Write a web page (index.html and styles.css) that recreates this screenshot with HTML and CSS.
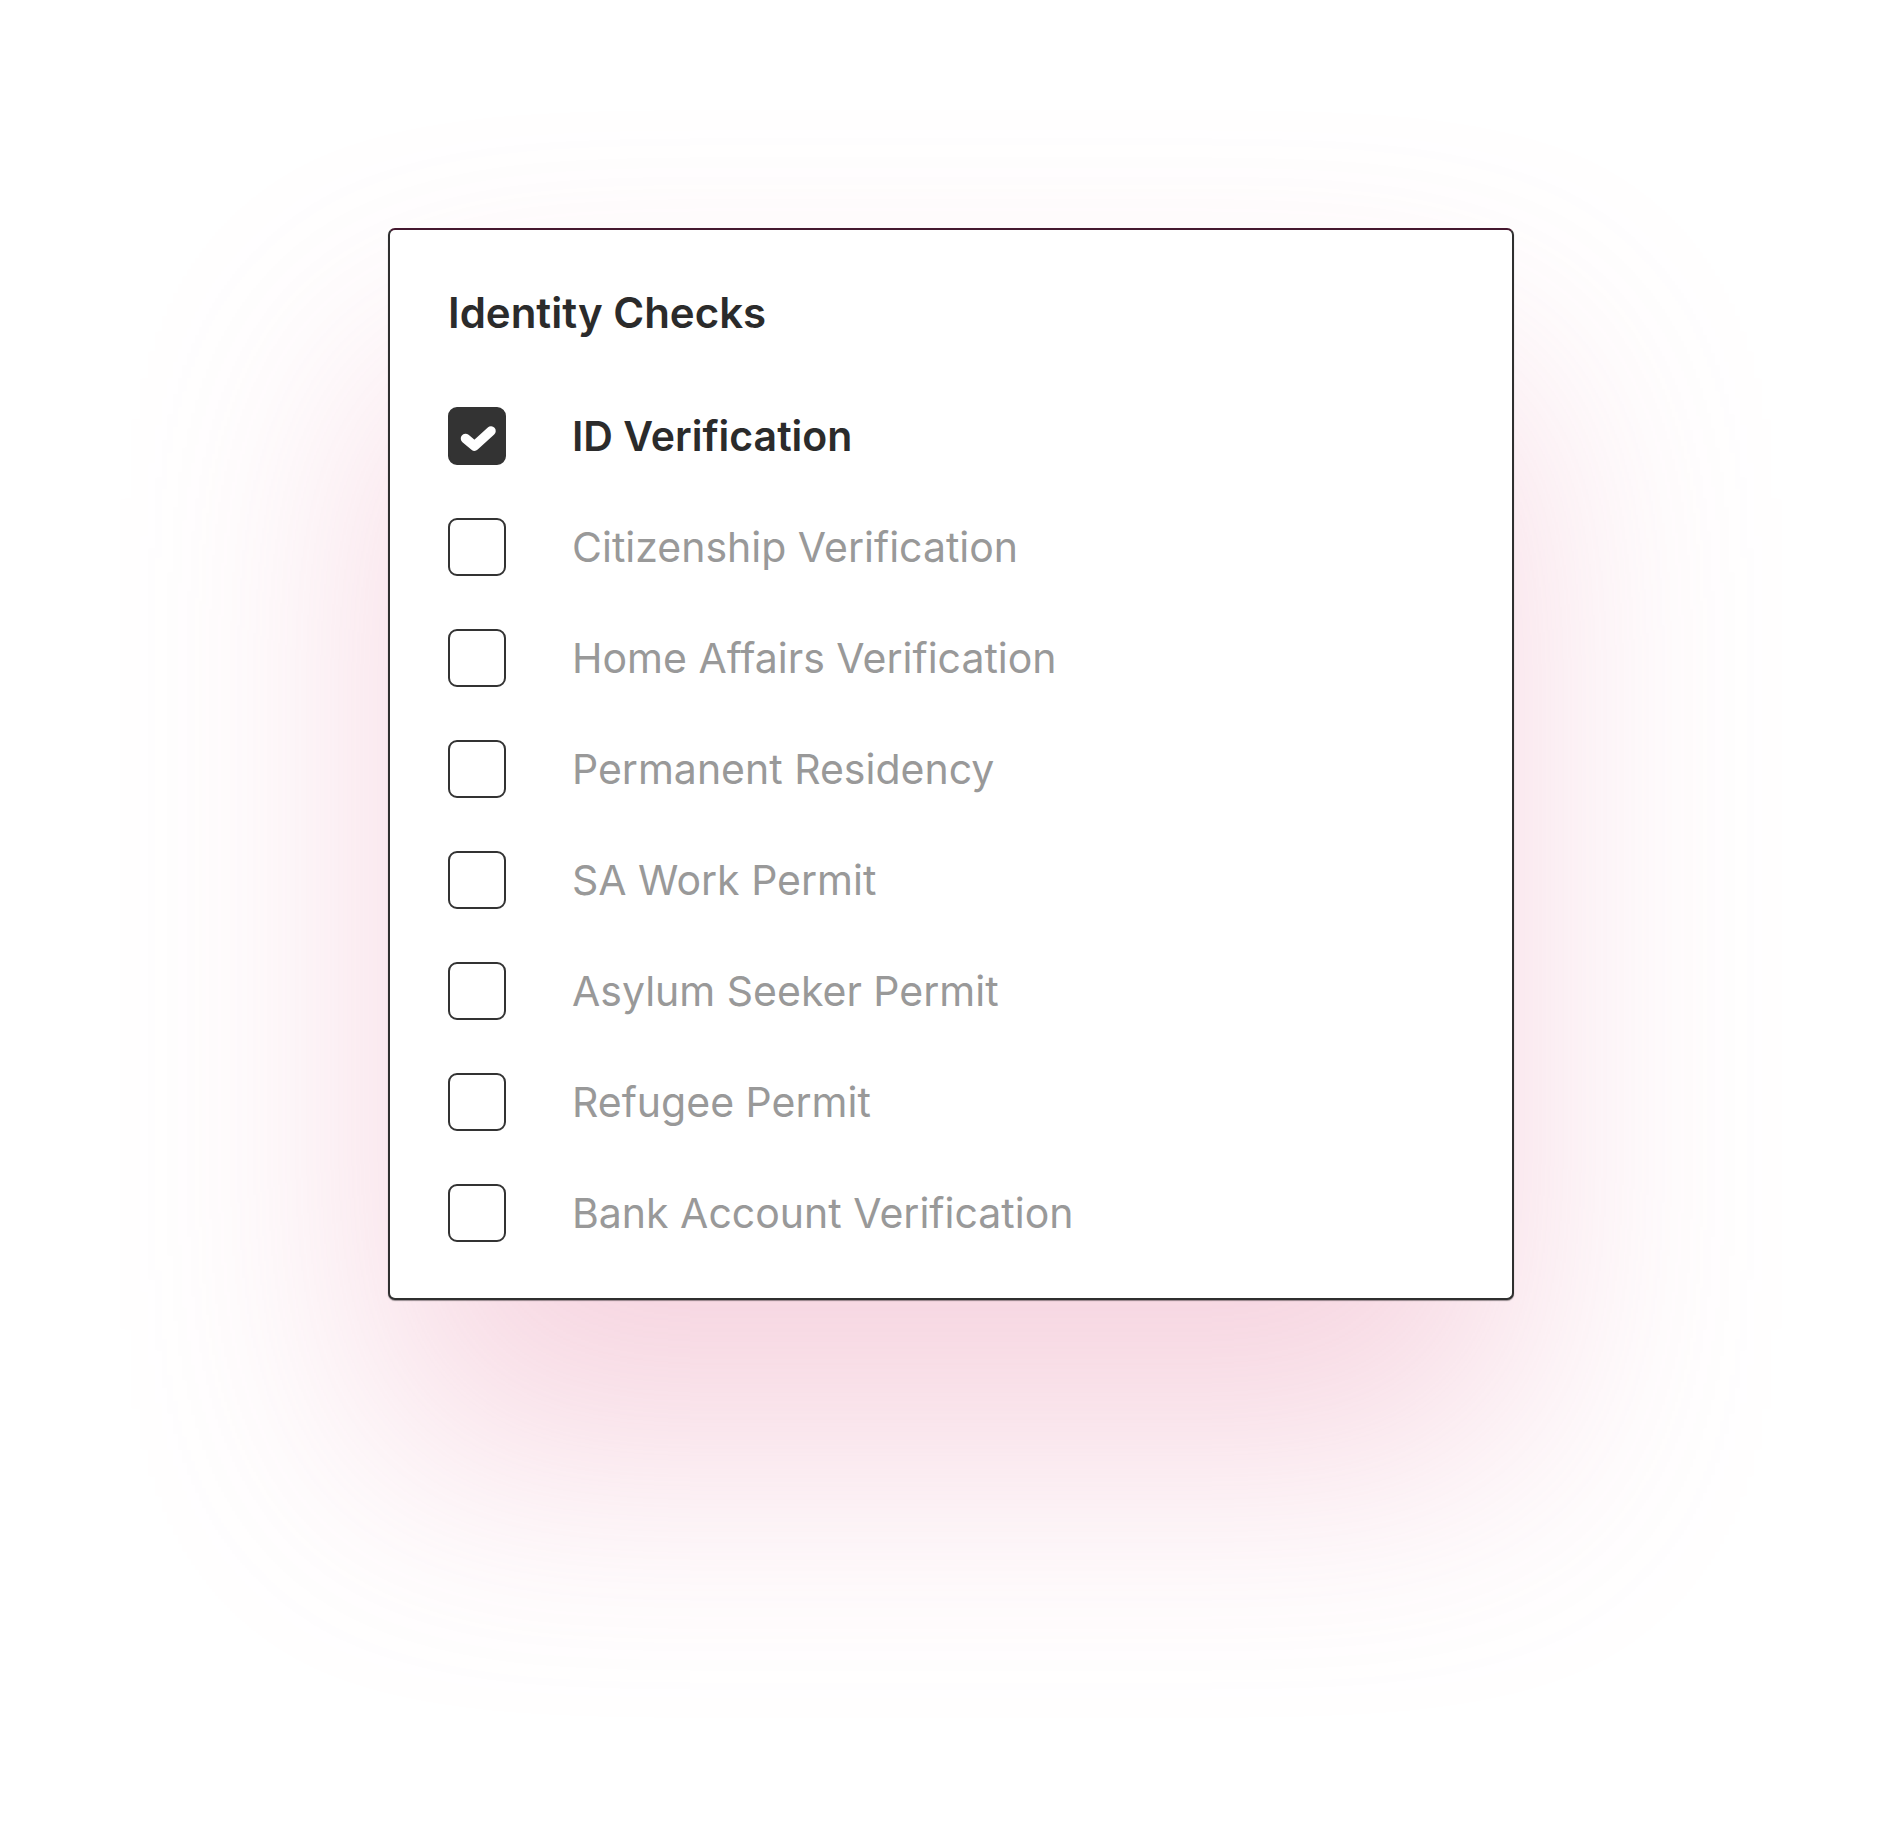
FILE: index.html
```html
<!DOCTYPE html>
<html lang="en">
<head>
  <meta charset="UTF-8" />
  <title>Identity Checks</title>
  <link rel="stylesheet" href="styles.css">
</head>
<body>
  <div class="page">
    <div class="card">
      <h2 class="card-title">Identity Checks</h2>
      <ul class="check-list">
        <li class="check-row checked">
          <span class="box">
            <svg viewBox="0 0 58 58" width="58" height="58">
              <polyline points="17.5,31.5 26.5,39 43,24" fill="none" stroke="#fff" stroke-width="9.5" stroke-linecap="round" stroke-linejoin="round" />
            </svg>
          </span>
          <span class="label">ID Verification</span>
        </li>
        <li class="check-row"><span class="box"></span><span class="label">Citizenship Verification</span></li>
        <li class="check-row"><span class="box"></span><span class="label">Home Affairs Verification</span></li>
        <li class="check-row"><span class="box"></span><span class="label">Permanent Residency</span></li>
        <li class="check-row"><span class="box"></span><span class="label">SA Work Permit</span></li>
        <li class="check-row"><span class="box"></span><span class="label">Asylum Seeker Permit</span></li>
        <li class="check-row"><span class="box"></span><span class="label">Refugee Permit</span></li>
        <li class="check-row"><span class="box"></span><span class="label">Bank Account Verification</span></li>
      </ul>
    </div>
  </div>
</body>
</html>
```

FILE: styles.css
```css
body {
  margin: 0;
  background: #fff;
  font-family: Inter, "Noto Sans", sans-serif;
  color: #2b2b2b;
}
.page {
  display: flex;
  justify-content: center;
  padding-top: 228px;
  min-height: 1848px;
  box-sizing: border-box;
}
.card {
  width: 1126px;
  height: 1072px;
  box-sizing: border-box;
  background: #fff;
  border: 2px solid #2f2f2f;
  border-top-color: #45182f;
  border-radius: 7px;
  padding: 59px 58px 0;
  box-shadow: 0 1px 1px rgba(0,0,0,0.4), 0 150px 300px rgba(225,110,150,0.3);
}
.card-title {
  margin: 0 0 43px;
  font-size: 42px;
  line-height: 48px;
  font-weight: 600;
  color: #2b2b2b;
}
.check-list {
  list-style: none;
  margin: 0;
  padding: 0;
}
.check-row {
  display: flex;
  align-items: center;
  height: 111px;
}
.box {
  flex: 0 0 58px;
  width: 58px;
  height: 58px;
  box-sizing: border-box;
  border: 2px solid #333;
  border-radius: 9px;
  margin-right: 66px;
}
.box svg {
  display: block;
  margin: -2px;
}
.checked .box {
  background: #333;
}
.label {
  font-size: 41px;
  color: #999;
}
.checked .label {
  color: #2b2b2b;
  font-weight: 600;
}
```
